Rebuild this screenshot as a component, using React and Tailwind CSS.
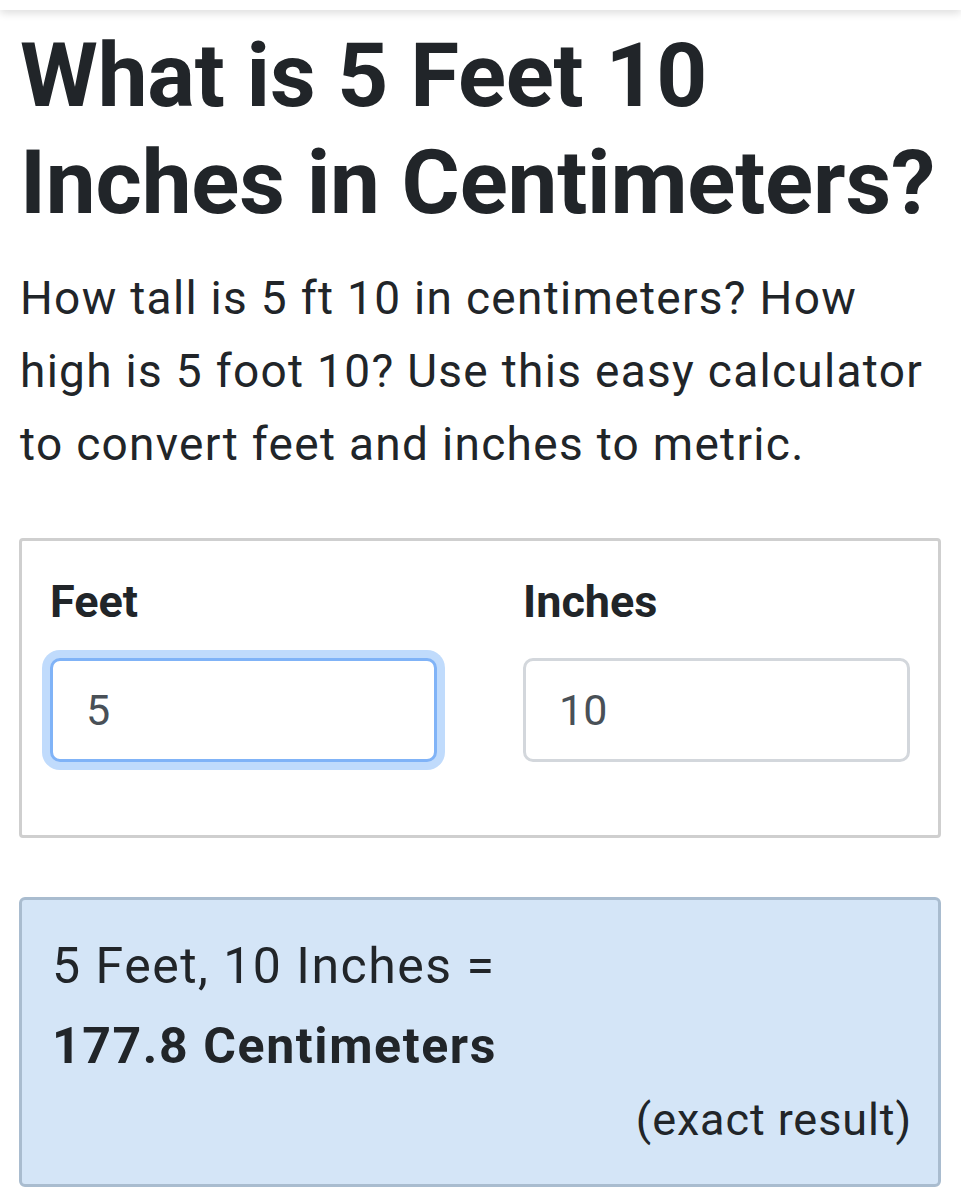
const labelClass = "block text-[45px] font-bold leading-[73px] text-[#212529]";
const inputClass =
  "h-[104px] w-full rounded-[10px] border-[3px] bg-white px-[33px] text-[43px] text-[#495057] outline-none";

export default function App() {
  return (
    <div className="min-h-[1200px] bg-white font-['Roboto',sans-serif] text-[#212529]">
      <div className="h-[10px] bg-white shadow-[0_3px_8px_rgba(0,0,0,0.14)]" />

      <div className="px-[20px] pt-[12px]">
        <h1 className="text-[89px] font-bold leading-[107px] tracking-[-0.2px]">
          What is 5 Feet 10 Inches in Centimeters?
        </h1>

        <p className="mt-[26px] text-[46px] leading-[73px] tracking-[1.3px]">
          How tall is 5 ft 10 in centimeters? How high is 5 foot 10? Use this easy calculator
          to convert feet and inches to metric.
        </p>

        <div className="-ml-px mt-[57px] h-[300px] rounded-[4px] border-[3px] border-[#cfcfcf] px-[28px] pt-[24px]">
          <div className="grid grid-cols-2 gap-[86px]">
            <div>
              <label className={labelClass}>Feet</label>
              <input
                readOnly
                value="5"
                className={`${inputClass} mt-[20px] border-[#80b3f7] shadow-[0_0_0_8px_#c0dbfc]`}
              />
            </div>
            <div>
              <label className={labelClass}>Inches</label>
              <input
                readOnly
                value="10"
                className={`${inputClass} mt-[20px] border-[#d3d7dc]`}
              />
            </div>
          </div>
        </div>

        <div className="-ml-px mt-[59px] rounded-[6px] border-[3px] border-[#a9bccf] bg-[#d4e5f7] px-[30px] pb-[30px] pt-[26px]">
          <p className="text-[50px] leading-[80px] tracking-[1.5px]">5 Feet, 10 Inches =</p>
          <p className="text-[50px] font-bold leading-[80px] tracking-[1.6px]">177.8 Centimeters</p>
          <p className="-mr-[4px] text-right text-[45px] leading-[68px] tracking-[0.9px]">
            (exact result)
          </p>
        </div>
      </div>
    </div>
  );
}
